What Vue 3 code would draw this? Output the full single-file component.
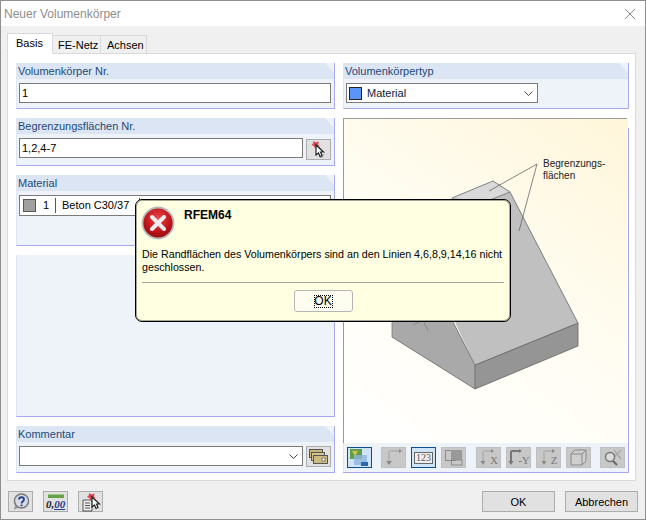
<template>
  <div class="window">
    <div class="titlebar">
      <span class="title">Neuer Volumenkörper</span>
      <svg class="close" width="12" height="12" viewBox="0 0 12 12"><path d="M1 1l10 10M11 1L1 11" stroke="#8a8a8a" fill="none" /></svg>
    </div>

    <div class="body">
      <div class="tabs">
        <div class="tab active">Basis</div>
        <div class="tab">FE-Netz</div>
        <div class="tab last">Achsen</div>
      </div>

      <div class="panel">
        <div class="col">
          <section class="group">
            <h4>Volumenkörper Nr.</h4>
            <div class="content"><div class="input">1</div></div>
          </section>

          <section class="group">
            <h4>Begrenzungsflächen Nr.</h4>
            <div class="content row">
              <div class="input grow">1,2,4-7</div>
              <button class="icon-btn pick">
                <svg width="21" height="19" viewBox="0 0 21 19">
                  <path d="M5 1l3 1.500 3-1-1 3 2 2-3 0-2 2-1-2.500-2.500-1 2-2z" fill="#d8434a" />
                  <path d="M11 16.500l1.500 1.500 3-1-1-3h3z" fill="#999" />
                  <path d="M8 5v10l2.500-2 1.500 3.500 2-1-1.500-3.500h3z" fill="#fff" stroke="#222" stroke-width="1.200" />
                </svg>
              </button>
            </div>
          </section>

          <section class="group">
            <h4>Material</h4>
            <div class="content material-body">
              <div class="input material">
                <span class="swatch"></span>
                <span class="mat-no">1</span>
                <span class="mat-name">Beton C30/37</span>
              </div>
            </div>
          </section>

          <section class="group blank"></section>

          <section class="group">
            <h4>Kommentar</h4>
            <div class="content row">
              <div class="input grow combo">
                <svg class="chevron" width="9" height="5" viewBox="0 0 9 5"><path d="M.5.500l4 4 4-4" stroke="#444" fill="none" /></svg>
              </div>
              <button class="icon-btn">
                <svg width="19" height="15" viewBox="0 0 19 15">
                  <rect x=".5" y=".5" width="13" height="8" fill="#c9b77a" stroke="#555" />
                  <rect x="2.500" y="3.500" width="13" height="8" fill="#d6c78f" stroke="#555" />
                  <rect x="4.500" y="6.500" width="14" height="8" fill="#cdbb80" stroke="#555" />
                  <rect x="13" y="9" width="3" height="3" fill="#fff" stroke="#555" stroke-width=".7" />
                </svg>
              </button>
            </div>
          </section>
        </div>

        <div class="col">
          <section class="group">
            <h4>Volumenkörpertyp</h4>
            <div class="content">
              <div class="input type-combo combo">
                <span class="type-swatch"></span>
                <span>Material</span>
                <svg class="chevron" width="9" height="5" viewBox="0 0 9 5"><path d="M.5.500l4 4 4-4" stroke="#444" fill="none" /></svg>
              </div>
            </div>
          </section>

          <section class="preview">
            <div class="figure">
              <svg width="284" height="324" viewBox="344 119 284 324">
                <!-- left face, runs up behind the message box -->
                <path d="M392 337V290L452 198 490 200 453 322 475 365V389z" fill="#a9a9a9" />
                <!-- front right face -->
                <path d="M475 365V389L578 346V323z" fill="#959595" stroke="#666" stroke-width=".8" />
                <path d="M392 337L475 389" stroke="#666" fill="none" stroke-width=".8" />
                <path d="M392 290V337" stroke="#777" fill="none" stroke-width=".8" />
                <!-- slope -->
                <path d="M510 192L578 323 475 365 440 290 490 200z" fill="#c0c0c0" />
                <path d="M452 198L493 181 510 192 490 200z" fill="#d9d9d9" />
                <path d="M452 198L493 181 510 192 578 323 475 365 453 322M490 200L510 192" stroke="#666" fill="none" stroke-width=".8" />
                <path d="M413 325L423 320 428 331" stroke="#777" fill="none" stroke-width=".7" />
                <path d="M489 191L537 164 519 231" stroke="#666" fill="none" stroke-width=".8" />
              </svg>
              <div class="callout">Begrenzungs-<br />flächen</div>
            </div>
            <div class="toolbar">
              <button class="tool on">
                <svg width="19" height="17" viewBox="0 0 19 17">
                  <rect x="0" y="0" width="12" height="10" fill="#5f9e4a" />
                  <path d="M2 2h6l-3 5z" fill="#d9c24a" />
                  <rect x="4" y="6" width="13" height="10" fill="#8db4dc" opacity=".8" />
                  <path d="M11 13h7v4h-7z" fill="#2b6aa8" />
                </svg>
              </button>
              <button class="tool gap-4">
                <svg width="19" height="17" viewBox="0 0 19 17"><path d="M5 2v13M5 2h12" stroke="#8a8a8a" stroke-width="2" fill="none" /><path d="M5 2v12M5 2h12" stroke="#ddd" fill="none" /><path d="M2 12l3 4 3-4zM15 0l3 2-3 2z" fill="#8a8a8a" /></svg>
              </button>
              <button class="tool on">
                <span class="num">123</span>
              </button>
              <button class="tool">
                <svg width="19" height="17" viewBox="0 0 19 17"><rect x="1.500" y="1.500" width="10" height="10" fill="none" stroke="#8a8a8a" /><rect x="7" y="1" width="11" height="10" fill="#999" /><rect x="7.500" y="11" width="10.500" height="5" fill="none" stroke="#8a8a8a" /></svg>
              </button>
              <button class="tool gap-5 axis">
                <svg width="15" height="17" viewBox="0 0 15 17"><path d="M4 2v11M4 2h9" stroke="#8a8a8a" stroke-width="2" fill="none" /><path d="M4 2v10M4 2h8" stroke="#ddd" fill="none" /><path d="M1.500 12l2.500 4 2.500-4zM12 0l3 2-3 2z" fill="#8a8a8a" /></svg><span>X</span>
              </button>
              <button class="tool axis">
                <svg width="15" height="17" viewBox="0 0 15 17"><path d="M4 2v11M4 2h9" stroke="#777" stroke-width="2" fill="none" /><path d="M1.500 12l2.500 4 2.500-4zM12 0l3 2-3 2z" fill="#777" /></svg><span>-Y</span>
              </button>
              <button class="tool axis">
                <svg width="15" height="17" viewBox="0 0 15 17"><path d="M4 2v11M4 2h9" stroke="#8a8a8a" stroke-width="2" fill="none" /><path d="M4 2v10M4 2h8" stroke="#ddd" fill="none" /><path d="M1.500 12l2.500 4 2.500-4zM12 0l3 2-3 2z" fill="#8a8a8a" /></svg><span>Z</span>
              </button>
              <button class="tool">
                <svg width="17" height="17" viewBox="0 0 17 17"><path d="M1 5l4-4h11v11l-4 4H1zM1 5h11v11M12 5l4-4" stroke="#8a8a8a" fill="#cfcfcf" /></svg>
              </button>
              <button class="tool gap-4">
                <svg width="19" height="17" viewBox="0 0 19 17"><path d="M11 1l7 9M18 1l-7 7" stroke="#aaa" stroke-width="1.500" /><circle cx="7" cy="8" r="4.500" fill="#ddd" stroke="#777" stroke-width="1.500" /><path d="M10 12l4 4" stroke="#666" stroke-width="2" /></svg>
              </button>
            </div>
          </section>
        </div>
      </div>

      <div class="footer">
        <div class="footer-icons">
          <button class="icon-btn">
            <svg width="18" height="18" viewBox="0 0 18 18">
              <path d="M3 12l-1 5 5-3z" fill="#9a9a9a" />
              <circle cx="9.500" cy="8" r="7" fill="#d8dbe8" stroke="#7a7a7a" stroke-width="1.500" />
              <path d="M7 6.500c0-3 5-3 5 0 0 2-2.500 2-2.500 4M9.500 11.500v1.800" stroke="#23408e" stroke-width="1.800" fill="none" />
            </svg>
          </button>
          <button class="icon-btn">
            <span class="decimals"><i></i><b>0,<u>00</u></b></span>
          </button>
          <button class="icon-btn">
            <svg width="20" height="20" viewBox="0 0 20 20">
              <path d="M2 8h9v11H2z" fill="#eee" stroke="#555" />
              <path d="M4 11h5M4 13.500h5M4 16h5" stroke="#555" />
              <path d="M8 1l2.500 1.500 3-1-.5 3 1.500 2-3 0-2 2-1-2.500-2.500-1 2-2z" fill="#d8434a" />
              <path d="M11 5v10l2.500-2 1.500 3.500 2-1-1.500-3.500h3z" fill="#fff" stroke="#222" stroke-width="1.200" />
            </svg>
          </button>
        </div>
        <div class="footer-actions">
          <button class="btn">OK</button>
          <button class="btn">Abbrechen</button>
        </div>
      </div>
    </div>

    <div class="message">
      <div class="message-head">
        <svg class="error-icon" width="34" height="34" viewBox="0 0 34 34">
          <defs>
            <radialGradient id="err" cx="50%" cy="35%" r="70%">
              <stop offset="0" stop-color="#e8474c" />
              <stop offset=".6" stop-color="#c0141a" />
              <stop offset="1" stop-color="#8a0c10" />
            </radialGradient>
          </defs>
          <circle cx="17" cy="17" r="15.500" fill="url(#err)" stroke="#b9b9b9" stroke-width="1.800" />
          <path d="M11 11l12 12M23 11L11 23" stroke="#eee" stroke-width="4" stroke-linecap="round" />
        </svg>
        <strong>RFEM64</strong>
      </div>
      <p>Die Randflächen des Volumenkörpers sind an den Linien 4,6,8,9,14,16 nicht geschlossen.</p>
      <div class="message-actions">
        <button class="message-ok"><span>OK</span></button>
      </div>
    </div>
  </div>
</template>

<script setup>
</script>

<style>
html, body {
  margin: 0;
  background: #f0f0f0;
}
</style>

<style scoped>
.window {
  position: relative;
  box-sizing: border-box;
  width: 646px;
  height: 520px;
  border: 1px solid #8f8f8f;
  font-family: "Liberation Sans", Arial, sans-serif;
  font-size: 11px;
  color: #000;
  background: #f0f0f0;
  display: flex;
  flex-direction: column;
}

.titlebar {
  height: 25px;
  background: #fff;
  display: flex;
  align-items: center;
  justify-content: space-between;
  padding: 0 9px 0 3px;
  flex: none;
}

.title {
  color: #8d8d8d;
  font-size: 12px;
}

.body {
  flex: 1;
  display: flex;
  flex-direction: column;
  padding: 7px 6px 0;
}

.tabs {
  display: flex;
  align-items: flex-end;
  height: 21px;
  margin-bottom: -1px;
  position: relative;
  z-index: 1;
}

.tab {
  box-sizing: border-box;
  width: 48px;
  height: 19px;
  line-height: 18px;
  padding-left: 5px;
  white-space: nowrap;
  background: #f0f0f0;
  border: 1px solid #d9d9d9;
  border-left-width: 0;
}

.tab.last {
  width: 46px;
  padding-left: 6px;
}

.tab.active {
  width: 46px;
  height: 21px;
  padding-left: 8px;
  background: #fff;
  border-left-width: 1px;
  border-bottom-color: #fff;
}

.panel {
  box-sizing: border-box;
  width: 629px;
  height: 428px;
  background: #fff;
  border: 1px solid #d9d9d9;
  padding: 9px 7px 7px 8px;
  display: grid;
  grid-template-columns: 319px 286px;
  column-gap: 8px;
}

.col {
  display: flex;
  flex-direction: column;
  gap: 9px;
}

.group {
  background: #eef2f9;
  border-right: 1px solid #a9a9ef;
  border-bottom: 1px solid #a9a9ef;
  border-left: 1px solid #dfe6f3;
}

.group h4 {
  margin: 0;
  height: 16px;
  padding-left: 1px;
  font-size: 11px;
  font-weight: 400;
  line-height: 16px;
  color: #1f4a78;
  background: #dbe5f4;
  clip-path: polygon(0 0, calc(100% - 9px) 0, 100% 10px, 100% 100%, 0 100%);
}

.content {
  padding: 4px 3px 5px 2px;
}

.row {
  display: flex;
  gap: 3px;
}

.input {
  box-sizing: border-box;
  height: 20px;
  line-height: 18px;
  padding-left: 2px;
  background: #fff;
  border: 1px solid #7a7a7a;
}

.grow {
  flex: 1;
  min-width: 0;
}

.combo {
  position: relative;
}

.chevron {
  position: absolute;
  right: 4px;
  top: 7px;
}

.material-body {
  box-sizing: border-box;
  height: 54px;
}

.material {
  display: flex;
  align-items: stretch;
  height: 21px;
}

.swatch {
  box-sizing: border-box;
  width: 13px;
  height: 13px;
  margin: 3px 0 0 1px;
  background: #a0a0a0;
  border: 1px solid #555;
}

.mat-no {
  box-sizing: border-box;
  width: 20px;
  margin: 2px 0;
  padding-right: 6px;
  line-height: 15px;
  text-align: right;
  border-right: 1px solid #555;
}

.mat-name {
  box-sizing: border-box;
  width: 84px;
  margin: 2px 0;
  padding-left: 6px;
  line-height: 15px;
  border-right: 1px solid #555;
}

.blank {
  flex: 1;
}

.type-combo {
  width: 192px;
  display: flex;
  align-items: center;
  gap: 5px;
  color: #0a1a3a;
}

.type-swatch {
  box-sizing: border-box;
  width: 13px;
  height: 13px;
  background: #5c94f8;
  border: 1px solid #222;
}

.preview {
  flex: 1;
  display: flex;
  flex-direction: column;
  padding: 1px 1px 0 0;
  border-bottom: 1px solid #a9a9ef;
  background:
    linear-gradient(#9a9a9a, #9a9a9a) 0 0 / calc(100% - 2px) 1px no-repeat,
    linear-gradient(#a9a9ef, #a9a9ef) 100% 10px / 1px 100% no-repeat;
}

.figure {
  flex: 1;
  position: relative;
  border-left: 1px solid #9a9a9a;
  background: linear-gradient(35deg, #fff 0%, #fffdf3 50%, #fff6da 100%);
  overflow: hidden;
}

.figure svg {
  display: block;
}

.callout {
  position: absolute;
  left: 199px;
  top: 39px;
  font-size: 10px;
  line-height: 12px;
  color: #222;
}

.toolbar {
  height: 29px;
  flex: none;
  box-sizing: border-box;
  background: #eef2f9;
  border-left: 1px solid #dfe6f3;
  display: flex;
  align-items: center;
  gap: 5px;
  padding: 0 3px;
}

.tool {
  box-sizing: border-box;
  width: 25px;
  height: 21px;
  padding: 0;
  display: flex;
  align-items: center;
  justify-content: center;
  background: #c8c8c8;
  border: 1px solid #c0c0c0;
  color: #777;
  font-family: "Liberation Serif", serif;
  font-size: 11px;
}

.tool.on {
  background: #cfe4f7;
  border: 1px solid #0f4f8f;
}

.axis span {
  margin: 5px 0 0 -4px;
}

.gap-4 { margin-left: 4px; }
.gap-5 { margin-left: 5px; }

.num {
  background: #eee;
  border: 1px solid #666;
  font-size: 10px;
  line-height: 10px;
  padding: 0 1px;
  color: #555;
}

.icon-btn {
  box-sizing: border-box;
  width: 25px;
  height: 21px;
  padding: 0;
  flex: none;
  display: flex;
  align-items: center;
  justify-content: center;
  background: #e1e1e1;
  border: 1px solid #adadad;
}

.pick {
  margin-top: 1px;
}

.footer {
  flex: 1;
  display: flex;
  align-items: flex-start;
  justify-content: space-between;
  padding: 10px 1px 0;
}

.footer-icons,
.footer-actions {
  display: flex;
  gap: 10px;
}

.btn {
  box-sizing: border-box;
  width: 73px;
  height: 21px;
  padding: 0;
  background: #e1e1e1;
  border: 1px solid #adadad;
  font-family: inherit;
  font-size: 11px;
  color: #000;
}

.decimals {
  display: flex;
  flex-direction: column;
  align-items: center;
  width: 17px;
}

.decimals i {
  width: 16px;
  height: 4px;
  background: #68a048;
  border-top: 1px solid #9ccc80;
  box-sizing: border-box;
}

.decimals b {
  font-family: "Liberation Serif", serif;
  font-style: italic;
  font-size: 11px;
  line-height: 12px;
  color: #222;
}

.decimals u {
  color: #23408e;
}

/* message box lies over the dialog */
.message {
  position: absolute;
  left: 134px;
  top: 198px;
  box-sizing: border-box;
  width: 376px;
  height: 123px;
  background: #ffffe1;
  border: 1px solid #000;
  box-shadow: inset 0 0 0 1px rgba(0, 0, 0, .35);
  border-radius: 7px;
  padding: 6px 6px 0;
}

.message-head {
  display: flex;
  height: 34px;
  gap: 9px;
}

.error-icon {
  margin-left: -1px;
  flex: none;
}

.message-head strong {
  font-size: 12px;
  line-height: 14px;
  margin-top: 2px;
}

.message p {
  margin: 8px 0 0;
  font-size: 10.700px;
  line-height: 13px;
  padding-bottom: 8px;
  border-bottom: 1px solid #a0a0a0;
}

.message-actions {
  display: flex;
  justify-content: center;
  padding-top: 7px;
}

.message-ok {
  box-sizing: border-box;
  width: 59px;
  height: 22px;
  padding: 0;
  background: #fdfdf0;
  border: 1px solid #b5b5b5;
  border-radius: 3px;
  font-family: inherit;
  font-size: 12px;
}

.message-ok span {
  display: inline-block;
  width: 19px;
  line-height: 13px;
  outline: 1px dotted #000;
  outline-offset: -1px;
}
</style>
